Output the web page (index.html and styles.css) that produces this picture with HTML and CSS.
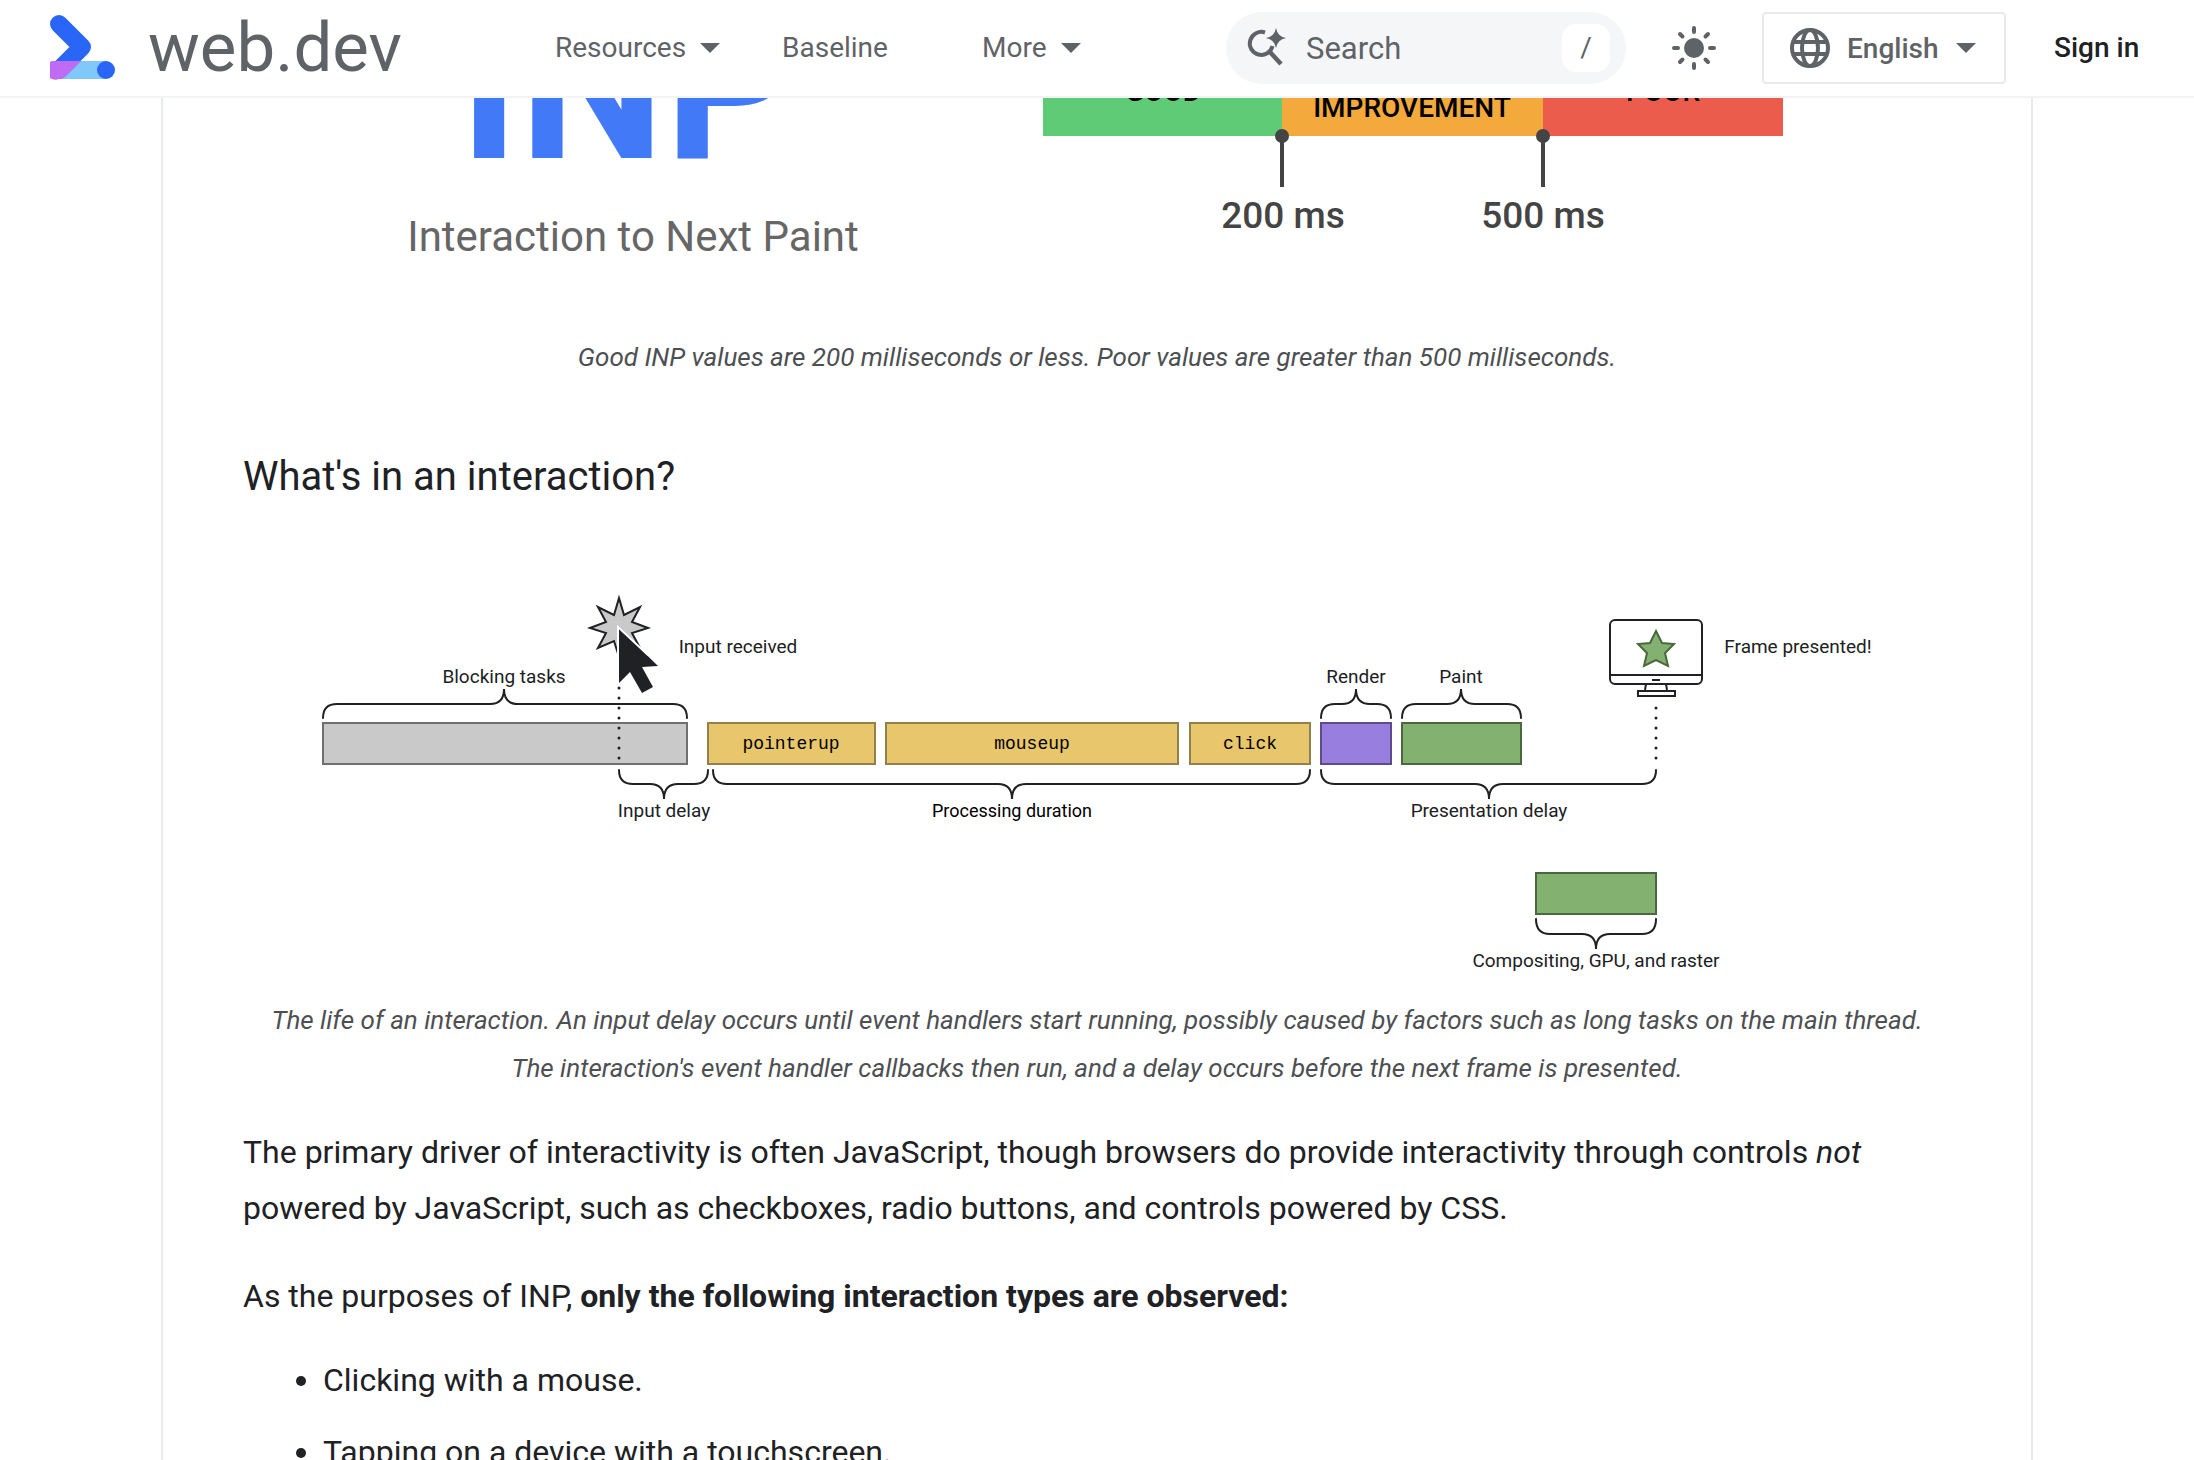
FILE: index.html
```html
<!DOCTYPE html>
<html lang="en">
<head>
    <meta charset="UTF-8">
    <meta name="viewport" content="width=device-width, initial-scale=1.0">
    <title>Interaction to Next Paint (INP)</title>

    <link rel="stylesheet" href="styles.css">
</head>
<body>

    <header class="topbar">
        <a class="logo" href="#">
            <svg class="logo_icon" viewBox="0 0 66 66" aria-hidden="true">
                <path d="M9 46H56V64H9z" fill="#80c8f9"/>
                <path d="M9 9L32 32L9 55" fill="none" stroke="#2a66f6" stroke-width="18" stroke-linecap="round" stroke-linejoin="round"/>
                <path d="M2 46H31L15 62A9 9 0 0 1 9 64A9 9 0 0 1 2 46z" fill="#c06bf3"/>
                <circle cx="56" cy="55" r="9" fill="#2a66f6"/>
            </svg>
            <span>web.dev</span>
        </a>

        <nav class="menu">
            <a class="menu_resources" href="#">Resources <svg class="caret" viewBox="0 0 20 10" aria-hidden="true"><path d="M0 0H20L10 10z"/></svg></a>
            <a class="menu_baseline" href="#">Baseline</a>
            <a href="#">More <svg class="caret" viewBox="0 0 20 10" aria-hidden="true"><path d="M0 0H20L10 10z"/></svg></a>
        </nav>

        <form class="search">
            <svg class="search_icon" viewBox="0 0 40 40" aria-hidden="true">
                <path d="M19 4.500A11.500 11.500 0 1 0 26.500 18" fill="none" stroke="#5f6368" stroke-width="4"/>
                <path d="M23 23L35 36" fill="none" stroke="#5f6368" stroke-width="4.500"/>
                <path d="M30 0Q31.500 8.500 40 10Q31.500 11.500 30 20Q28.500 11.500 20 10Q28.500 8.500 30 0z" fill="#5f6368"/>
            </svg>
            <input type="text" id="search" name="search" placeholder="Search" aria-label="Search" />
            <kbd>/</kbd>
        </form>

        <button class="theme" type="button" aria-label="Theme">
            <svg viewBox="0 0 44 44" aria-hidden="true">
                <circle cx="22" cy="22" r="10" fill="#5f6368"/>
                <path d="M22 2V6M22 38V42M2 22H6M38 22H42M8 8L10.500 10.500M33.500 33.500L36 36M36 8L33.500 10.500M10.500 33.500L8 36" fill="none" stroke="#5f6368" stroke-width="4" stroke-linecap="round"/>
            </svg>
        </button>

        <div class="language">
            <svg class="globe" viewBox="0 0 40 40" aria-hidden="true">
                <g fill="none" stroke="#5f6368" stroke-width="4">
                    <circle cx="20" cy="20" r="18"/>
                    <ellipse cx="20" cy="20" rx="8" ry="18"/>
                    <path d="M3 14H37M3 26H37"/>
                </g>
            </svg>
            <select id="language" name="language" aria-label="Language">
                <option>English</option>
            </select>
            <svg class="caret" viewBox="0 0 20 10" aria-hidden="true"><path d="M0 0H20L10 10z"/></svg>
        </div>

        <a class="signin" href="#">Sign in</a>
    </header>

    <main class="article">
        <figure>
            <svg class="picture" viewBox="243 0 1708 333" role="img" aria-label="INP thresholds">
                <text class="inp" x="459" y="158">INP</text>
                <text class="inp_name" x="633" y="251">Interaction to Next Paint</text>

                <rect x="1043" y="20" width="239" height="116" fill="#60cb76"/>
                <rect x="1282" y="20" width="261" height="116" fill="#f3a93c"/>
                <rect x="1543" y="20" width="240" height="116" fill="#ec5c4d"/>
                <g class="rating">
                    <text x="1163" y="101">GOOD</text>
                    <text x="1412" y="83">NEEDS</text>
                    <text x="1412" y="117">IMPROVEMENT</text>
                    <text x="1663" y="101">POOR</text>
                </g>

                <path d="M1282 136V187M1543 136V187" stroke="#444" stroke-width="4"/>
                <circle cx="1282" cy="136" r="7" fill="#444"/>
                <circle cx="1543" cy="136" r="7" fill="#444"/>
                <g class="limit">
                    <text x="1283" y="228">200 ms</text>
                    <text x="1543" y="228">500 ms</text>
                </g>
            </svg>
            <figcaption>Good INP values are 200 milliseconds or less. Poor values are greater than 500 milliseconds.</figcaption>
        </figure>

        <h3>What's in an interaction?</h3>

        <figure>
            <svg class="picture" viewBox="243 501 1708 495" role="img" aria-label="The life of an interaction">
                <!-- tasks -->
                <g stroke-width="2">
                    <rect x="323" y="723" width="364" height="41" fill="#c9c9c9" stroke="#6f6f6f"/>
                    <g fill="#e8c66c" stroke="#94804a">
                        <rect x="708" y="723" width="167" height="41"/>
                        <rect x="886" y="723" width="292" height="41"/>
                        <rect x="1190" y="723" width="120" height="41"/>
                    </g>
                    <rect x="1321" y="723" width="70" height="41" fill="#987fdf" stroke="#5c4d8a"/>
                    <g fill="#83b170" stroke="#4b673f">
                        <rect x="1402" y="723" width="119" height="41"/>
                        <rect x="1536" y="873" width="120" height="41"/>
                    </g>
                </g>

                <!-- braces -->
                <g class="brace">
                    <path d="M323 718Q323 704 337 704H490Q504 704 504 689Q504 704 518 704H673Q687 704 687 718"/>
                    <path d="M1321 718Q1321 704 1335 704H1342Q1356 704 1356 689Q1356 704 1370 704H1377Q1391 704 1391 718"/>
                    <path d="M1402 718Q1402 704 1416 704H1447Q1461 704 1461 689Q1461 704 1475 704H1507Q1521 704 1521 718"/>
                    <path d="M619 770Q619 784 633 784H650Q664 784 664 799Q664 784 678 784H694Q708 784 708 770"/>
                    <path d="M713 770Q713 784 727 784H998Q1012 784 1012 799Q1012 784 1026 784H1296Q1310 784 1310 770"/>
                    <path d="M1321 770Q1321 784 1335 784H1475Q1489 784 1489 799Q1489 784 1503 784H1642Q1656 784 1656 770"/>
                    <path d="M1536 919Q1536 934 1550 934H1582Q1596 934 1596 949Q1596 934 1610 934H1642Q1656 934 1656 919"/>
                </g>

                <!-- input burst and pointer -->
                <path d="M619 598L624 615L640 607L632 622L648 628L632 633L640 648L624 641L619 657L614 641L598 648L606 633L590 628L606 622L598 607L614 615z" fill="#c9c9c9" stroke="#202124" stroke-width="2"/>
                <path class="dots" d="M619 688V762M1656 708V762"/>
                <path d="M619 628L658 666L642 667L653 687L642 693L630 672L619 683z" fill="#202124"/>
                <path d="M618 660V627L648 655" fill="none" stroke="#fff" stroke-width="2"/>

                <!-- monitor -->
                <g fill="none" stroke="#202124" stroke-width="2">
                    <rect x="1610" y="620" width="92" height="64" rx="5"/>
                    <path d="M1610 675H1702M1652 680H1660M1646 684L1645 690M1666 684L1667 690"/>
                    <rect x="1638" y="691" width="37" height="5"/>
                </g>
                <path d="M1656 631L1662 643L1674 644L1665 653L1668 666L1656 660L1644 666L1647 653L1638 644L1650 643z" fill="#83b170" stroke="#4b673f" stroke-width="2"/>

                <g class="event">
                    <text x="791" y="749">pointerup</text>
                    <text x="1032" y="749">mouseup</text>
                    <text x="1250" y="749">click</text>
                </g>
                <g class="label">
                    <text x="504" y="683">Blocking tasks</text>
                    <text x="738" y="653">Input received</text>
                    <text x="1356" y="683">Render</text>
                    <text x="1461" y="683">Paint</text>
                    <text x="1798" y="653">Frame presented!</text>
                    <text x="664" y="817">Input delay</text>
                    <text class="label_processing" x="1012" y="817">Processing duration</text>
                    <text x="1489" y="817">Presentation delay</text>
                    <text x="1596" y="967">Compositing, GPU, and raster</text>
                </g>
            </svg>
            <figcaption>The life of an interaction. An input delay occurs until event handlers start running, possibly caused by factors such as long tasks on the main thread. The interaction's event handler callbacks then run, and a delay occurs before the next frame is presented.</figcaption>
        </figure>

        <p>The primary driver of interactivity is often JavaScript, though browsers do provide interactivity through controls <em>not</em> powered by JavaScript, such as checkboxes, radio buttons, and controls powered by CSS.</p>

        <p>As the purposes of INP, <strong>only the following interaction types are observed:</strong></p>

        <ul>
            <li>Clicking with a mouse.</li>
            <li>Tapping on a device with a touchscreen.</li>
        </ul>
    </main>

</body>
</html>
```

FILE: styles.css
```css
* {
    box-sizing: border-box;
}

html {
    height: 100%;
    overflow: hidden;
}

body {
    margin: 0;
    background: #fff;
    color: #202124;
    font-family: Roboto, "Liberation Sans", sans-serif;
    font-size: 32px;
    line-height: 56px;
}

a {
    color: inherit;
    text-decoration: none;
}

input, select, button, kbd {
    padding: 0;
    border: 0;
    background: none;
    color: #5f6368;
    font-family: inherit;
}

.topbar {
    position: fixed;
    top: 0;
    left: 0;
    right: 0;
    z-index: 1;
    display: flex;
    align-items: center;
    height: 98px;
    padding: 0 50px;
    border-bottom: 2px solid #f1f3f4;
    background: #fff;
    color: #5f6368;
    font-size: 28px;
    line-height: 36px;
}

.logo {
    display: flex;
    align-items: center;
    gap: 32px;
    width: 505px;
    font-size: 69px;
}

.logo_icon {
    width: 66px;
    height: 66px;
}

.menu {
    display: flex;
}

.menu a {
    display: flex;
    align-items: center;
    gap: 14px;
}

.menu_resources {
    width: 227px;
}

.menu_baseline {
    width: 200px;
}

.caret {
    width: 20px;
    height: 10px;
    fill: #5f6368;
}

.search {
    display: flex;
    align-items: center;
    width: 400px;
    height: 72px;
    margin-left: auto;
    padding: 0 16px 0 20px;
    border-radius: 36px;
    background: #f4f6f8;
}

.search_icon {
    width: 40px;
    height: 40px;
}

.search input {
    flex: 1;
    min-width: 0;
    margin-left: 20px;
    outline: none;
    font-size: 31px;
}

.search input::placeholder {
    color: #5f6368;
    opacity: 1;
}

kbd {
    width: 48px;
    height: 48px;
    border-radius: 14px;
    background: #fff;
    font-size: 28px;
    line-height: 48px;
    text-align: center;
}

.theme {
    width: 44px;
    height: 44px;
    margin: 0 46px;
}

.theme svg {
    display: block;
}

.language {
    display: flex;
    align-items: center;
    justify-content: space-between;
    width: 244px;
    height: 72px;
    padding: 0 28px 0 26px;
    border: 2px solid #e8eaed;
    border-radius: 4px;
}

.globe {
    width: 40px;
    height: 40px;
}

.language select {
    appearance: none;
    font-size: 28px;
    font-weight: 500;
}

.signin {
    width: 90px;
    margin-left: 48px;
    color: #202124;
    font-weight: 500;
    white-space: nowrap;
}

.article {
    max-width: 1872px;
    min-height: 100vh;
    margin: 0 auto;
    padding: 0 80px;
    border: solid #e8eaed;
    border-width: 0 2px;
}

figure {
    margin: 0;
}

.picture {
    display: block;
    width: 100%;
}

.picture text {
    text-anchor: middle;
}

.picture .inp {
    fill: #4279f7;
    font-size: 206px;
    font-weight: 700;
    text-anchor: start;
}

.inp_name {
    fill: #666;
    font-size: 42px;
}

.rating {
    font-size: 28px;
    font-weight: 500;
}

.limit {
    fill: #444;
    font-size: 37px;
    font-weight: 500;
}

.brace {
    fill: none;
    stroke: #202124;
    stroke-width: 2;
    stroke-linecap: round;
}

.dots {
    stroke: #202124;
    stroke-width: 3;
    stroke-linecap: round;
    stroke-dasharray: 0 10;
}

.event {
    fill: #000;
    font-family: "Liberation Mono", monospace;
    font-size: 18px;
}

.label {
    fill: #202124;
    font-size: 19px;
}

.label_processing {
    fill: #000;
    font-size: 18px;
}

figcaption {
    padding: 0 12px;
    color: #4d4f52;
    font-size: 26px;
    font-style: italic;
    line-height: 48px;
    text-align: center;
}

h3 {
    margin: 72px 0 0;
    font-size: 40px;
    font-weight: 400;
    line-height: 48px;
}

p {
    margin: 32px 0 0;
}

ul {
    margin: 28px 0 0;
    padding-left: 80px;
}

li {
    margin-bottom: 16px;
}
```
